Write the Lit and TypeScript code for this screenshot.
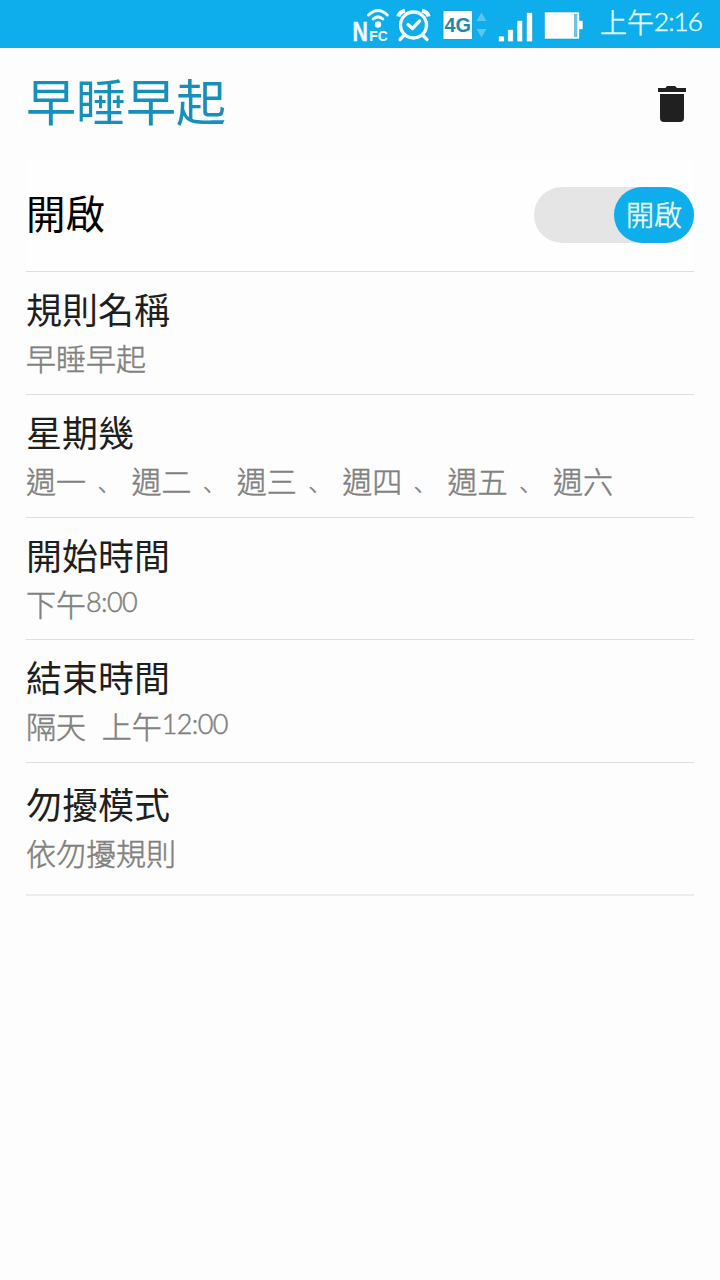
import { LitElement, html, css, svg } from "lit";
import { customElement } from "lit/decorators.js";

@customElement("status-bar")
class StatusBar extends LitElement {
  static styles = css`
    :host {
      display: flex;
      height: 48px;
      background: #0eaeed;
      color: #e9fdff;
    }
    .icons {
      display: block;
      width: 600px;
      height: 48px;
      flex: none;
    }
    .clock {
      font-size: 27px;
      line-height: 44px;
      font-weight: 300;
      white-space: nowrap;
      -webkit-text-stroke: 0.5px currentColor;
    }
    .digits {
      font-family: Lato, sans-serif;
      font-size: 26px;
      letter-spacing: -0.9px;
      vertical-align: 2px;
      line-height: 1;
    }
  `;
  render() {
    return html`
      <svg class="icons" viewBox="0 0 600 48">
        ${svg`
        <g fill="#f4fdff" font-family="Liberation Sans, sans-serif" font-weight="700">
          <text transform="translate(352.500 41) scale(.76 1)" font-size="28" stroke="#f4fdff" stroke-width=".4">N</text>
          <text transform="translate(369.300 41) scale(.93 1)" font-size="15">FC</text>
        </g>
        <g fill="none" stroke="#f4fdff">
          <path stroke-width="3" stroke-linecap="round" d="M368.500 15Q378 6 387.300 15M373.200 19Q378 14.700 382.800 19"/>
          <circle cx="413.500" cy="25" r="13" stroke-width="3.300"/>
          <path stroke-width="3.300" stroke-linecap="round" stroke-linejoin="round" d="M408 24.500L412.500 28.500L419.500 21M404 35.500L400 39.500M423 35.500L427 39.500"/>
          <path stroke-width="4.200" d="M398.300 16.500Q399.500 12 405 10.800M428.700 16.500Q427.500 12 422 10.800"/>
        </g>
        <circle cx="378" cy="24.500" r="3.200" fill="#f4fdff"/>
        <rect x="443" y="10.500" width="29.500" height="29" rx="1" fill="#fff" stroke="#0795ca" stroke-width=".8"/>
        <text x="444.500" y="32" font-family="Liberation Sans, sans-serif" font-weight="700" font-size="20" textLength="26.500" lengthAdjust="spacingAndGlyphs" fill="#2089ab">4G</text>
        <path fill="#5bc5ee" d="M481.500 12.500L486.500 21H476.500ZM481.500 37.500L486.500 29H476.500Z"/>
        <g fill="#fff" stroke="#0795ca" stroke-width=".5">
          <rect x="498.500" y="36" width="5.800" height="5.800" rx="1"/>
          <rect x="507.700" y="29.500" width="5.600" height="12.300" rx="1"/>
          <rect x="517" y="20.500" width="5.600" height="21.300" rx="1"/>
          <rect x="526.500" y="12.500" width="6" height="29.300" rx="1"/>
          <path d="M544.500 12H579.500V20.500H583V29.500H579.500V39H544.500Z"/>
        </g>
        <rect x="574" y="14" width="3.300" height="23" fill="#6dc4e6"/>`}
      </svg>
      <div class="clock">上午<span class="digits">2:16</span></div>
    `;
  }
}

@customElement("setting-row")
class SettingRow extends LitElement {
  static properties = { label: {}, value: {}, time: {} };
  declare label: string;
  declare value: string;
  declare time: string;
  static styles = css`
    :host {
      display: block;
      box-sizing: border-box;
      height: 123px;
      padding-top: 12px;
      border-bottom: 1px solid #dedede;
    }
    .label {
      font-size: 36px;
      line-height: 48px;
      color: #1f1f1f;
    }
    .value {
      font-size: 30px;
      line-height: 50px;
      font-weight: 300;
      color: #80807e;
      white-space: pre;
      -webkit-text-stroke: 0.5px currentColor;
    }
    .comma {
      margin: 0 4px;
      font-family: "Noto Sans CJK JP", sans-serif;
      font-size: 22px;
      line-height: 1;
      vertical-align: 2px;
    }
    .digits {
      font-family: Lato, sans-serif;
      font-size: 27px;
      letter-spacing: -0.6px;
      vertical-align: 4px;
      line-height: 1;
    }
  `;
  render() {
    const parts = (this.value ?? "").split("、");
    return html`
      <div class="label">${this.label}</div>
      <div class="value">${parts.map((part, i) =>
        i ? html`<span class="comma" lang="ja">、</span>${part}` : part
      )}<span class="digits">${this.time}</span></div>
    `;
  }
}

@customElement("app-root")
class AppRoot extends LitElement {
  static styles = css`
    :host {
      display: block;
      min-height: 1280px;
      background: #fdfdfd;
      font-family: "Noto Sans CJK TC", sans-serif;
    }
    .header {
      display: flex;
      justify-content: space-between;
      box-sizing: border-box;
      height: 112px;
      padding: 15px 33px 0 26px;
    }
    .title {
      margin: 0;
      font-size: 50px;
      line-height: 72px;
      font-weight: 400;
      color: #158fbd;
    }
    .trash {
      width: 30px;
      height: 38px;
      margin-top: 22px;
    }
    .list {
      padding: 0 26px;
    }
    .enable {
      display: flex;
      justify-content: space-between;
      box-sizing: border-box;
      height: 112px;
      background: #fefefe;
      border-bottom: 1px solid #dedede;
    }
    .enable-label {
      font-size: 39.5px;
      line-height: 104px;
      color: #000;
    }
    .switch {
      display: flex;
      justify-content: flex-end;
      width: 160px;
      height: 56px;
      margin-top: 27px;
      border-radius: 28px;
      background: #e5e5e5;
    }
    .knob {
      width: 80px;
      border-radius: 28px;
      background: #0eaeed;
      color: #eafeff;
      font-size: 28px;
      line-height: 54px;
      font-weight: 300;
      text-align: center;
      -webkit-text-stroke: 0.5px currentColor;
    }
    .days {
      word-spacing: 1.05px;
    }
    .next-day {
      word-spacing: 1.2px;
    }
    .short {
      height: 122px;
    }
    .last {
      height: 133px;
      padding-top: 16px;
      border-bottom: 2px solid #ececec;
    }
  `;
  render() {
    return html`
      <status-bar></status-bar>
      <div class="header">
        <h1 class="title">早睡早起</h1>
        <svg class="trash" viewBox="0 0 30 38" fill="#202020">
          <path d="M1 3H8.500L10 1H18L20 3H29V7H1Z" />
          <path d="M3 9H27V33Q27 37 23 37H7Q3 37 3 33Z" />
        </svg>
      </div>
      <div class="list">
        <div class="enable">
          <div class="enable-label">開啟</div>
          <div class="switch"><div class="knob">開啟</div></div>
        </div>
        <setting-row label="規則名稱" value="早睡早起"></setting-row>
        <setting-row class="days" label="星期幾" value="週一 、 週二 、 週三 、 週四 、 週五 、 週六"></setting-row>
        <setting-row class="short" label="開始時間" value="下午" time="8:00"></setting-row>
        <setting-row class="next-day" label="結束時間" value="隔天  上午" time="12:00"></setting-row>
        <setting-row class="last" label="勿擾模式" value="依勿擾規則"></setting-row>
      </div>
    `;
  }
}
